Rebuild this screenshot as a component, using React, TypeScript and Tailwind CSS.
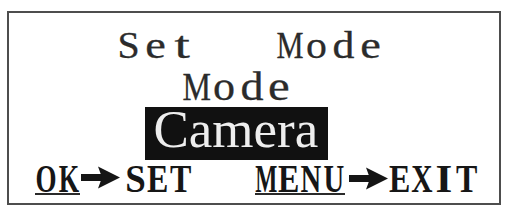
function Arrow({ className }: { className?: string }) {
  return (
    <svg className={className} width="39" height="23" viewBox="0 0 39 23">
      <rect x="0" y="8" width="24" height="7" fill="#151515" />
      <polygon points="17,0.5 39,11.5 17,22.5 21,11.5" fill="#151515" />
    </svg>
  );
}

const topScale: Record<string, string> = {
  S: "scale-x-[1.05]",
  e: "scale-x-[1.22]",
  t: "scale-x-[1.45]",
  M: "scale-x-[0.8]",
  o: "scale-x-[1.1]",
  d: "scale-x-[1.15]",
  " ": "",
};

const bottomScale: Record<string, string> = {
  O: "scale-x-[0.66]",
  K: "scale-x-[0.64]",
  S: "scale-x-[0.9]",
  E: "scale-x-[0.78]",
  T: "scale-x-[0.78]",
  M: "scale-x-[0.57]",
  N: "scale-x-[0.7]",
  U: "scale-x-[0.7]",
  X: "scale-x-[0.72]",
  I: "scale-x-[1.05]",
};

function TopRow({ text, cell }: { text: string; cell: string }) {
  return (
    <div className="flex">
      {text.split("").map((c, i) => (
        <span key={i} className={`${cell} flex justify-center`}>
          <span className={`inline-block ${topScale[c] ?? ""}`}>{c === " " ? "\u00a0" : c}</span>
        </span>
      ))}
    </div>
  );
}

function BottomWord({ text, underline }: { text: string; underline?: boolean }) {
  return (
    <div className={`flex h-[33px] ${underline ? "border-b-[2px] border-[#2a2a2a]" : ""}`}>
      {text.split("").map((c, i) => (
        <span key={i} className="w-[22.3px] flex justify-center">
          <span className={`inline-block ${bottomScale[c] ?? ""}`}>{c}</span>
        </span>
      ))}
    </div>
  );
}

export default function App() {
  return (
    <div className="w-[507px] h-[209px] bg-white overflow-hidden pt-[11px] pl-[7px]">
      <div className="w-[494px] h-[194px] border-2 border-[#4d4d4d] flex flex-col">
        <div className="mt-[12px] h-[40px] leading-[40px] text-[38px] pl-[106.5px] text-[#2b2b2b] [-webkit-text-stroke:0.3px_#2b2b2b] font-['Liberation_Serif',serif]">
          <TopRow text="Set   Mode" cell="w-[26.8px]" />
        </div>
        <div className="mt-[3px] h-[38px] leading-[38px] text-[40px] pl-[174px] text-[#2b2b2b] [-webkit-text-stroke:0.3px_#2b2b2b] font-['Liberation_Serif',serif]">
          <TopRow text="Mode" cell="w-[27.5px]" />
        </div>
        <div className="mt-[1px] ml-[136px] w-[183px] h-[53px] bg-[#111111] pl-[8.5px]">
          <span className="block h-[53px] leading-[44px] text-[53px] text-[#eeeeee] font-['Liberation_Serif',serif]">
            Camera
          </span>
        </div>
        <div className="mt-[2px] flex items-start pl-[26px] leading-[33px] text-[41px] font-bold text-[#161616] font-['Liberation_Serif',serif]">
          <BottomWord text="OK" underline />
          <Arrow className="ml-[1.4px] mt-[4px]" />
          <div className="ml-[4.5px]">
            <BottomWord text="SET" />
          </div>
          <div className="ml-[64px]">
            <BottomWord text="MENU" underline />
          </div>
          <Arrow className="ml-[4px] mt-[5px]" />
          <div className="ml-[1px]">
            <BottomWord text="EXIT" />
          </div>
        </div>
      </div>
    </div>
  );
}
